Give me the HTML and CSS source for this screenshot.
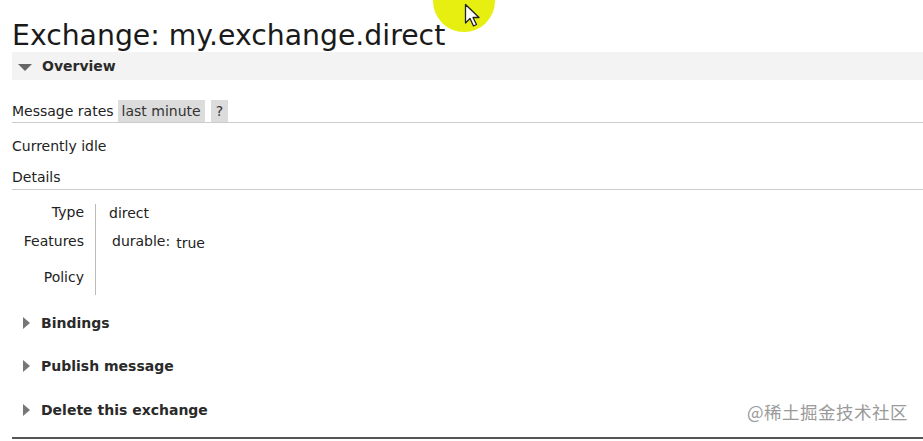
FILE: index.html
```html
<!DOCTYPE html>
<html>
<head>
<meta charset="utf-8">
<link rel="stylesheet" href="styles.css">
</head>
<body>
<div class="page">
  <h1 class="title">Exchange: my.exchange.direct</h1>
  <div class="section-head open"><span class="tri-down"></span><span class="section-label">Overview</span></div>
  <div class="rates">
    <span class="rates-label">Message rates</span>
    <span class="pill">last minute</span>
    <span class="pill help">?</span>
  </div>
  <div class="idle">Currently idle</div>
  <div class="details-head">Details</div>
  <div class="facts">
    <div class="keys">
      <div class="key k-type">Type</div>
      <div class="key k-feat">Features</div>
      <div class="key k-pol">Policy</div>
    </div>
    <div class="vals">
      <div class="val v-type">direct</div>
      <div class="val v-feat"><span class="fkey">durable:</span><span class="fval">true</span></div>
      <div class="val v-pol"></div>
    </div>
  </div>
  <div class="section-head closed s1"><span class="tri-right"></span><span class="section-label">Bindings</span></div>
  <div class="section-head closed s2"><span class="tri-right"></span><span class="section-label">Publish message</span></div>
  <div class="section-head closed s3"><span class="tri-right"></span><span class="section-label">Delete this exchange</span><span class="watermark">@稀土掘金技术社区</span></div>
  <div class="footer-line"></div>
</div>
<div class="cursor-hl">
  <svg class="cursor" width="18" height="26" viewBox="0 0 18 26"><path d="M1.5 1.5 L1.5 20 L6 15.5 L9.5 23 L12.5 21.5 L9 14.5 L15 14.5 Z" fill="#fff" stroke="#222" stroke-width="1.3" stroke-linejoin="round"/></svg>
</div>
</body>
</html>
```
FILE: styles.css
```css
html, body { margin: 0; padding: 0; background: #fff; }
body { font-family: "DejaVu Sans", Verdana, sans-serif; color: #222; font-size: 14px; overflow: hidden; width: 923px; height: 441px; position: relative; }
.page { padding: 0 0 0 12px; }
.title { margin: 0; padding-top: 19px; font-weight: normal; font-size: 28.3px; line-height: 33px; height: 33px; color: #1a1a1a; white-space: nowrap; }
.section-head { display: flex; align-items: center; height: 28px; }
.section-head.open { background: #f3f3f3; }
.section-label { font-weight: bold; font-size: 14px; color: #2a2a2a; }
.tri-down { width: 0; height: 0; border-left: 7px solid transparent; border-right: 7px solid transparent; border-top: 7px solid #666; margin: 2px 10px 0 6px; }
.tri-right { width: 0; height: 0; border-top: 6px solid transparent; border-bottom: 6px solid transparent; border-left: 7px solid #777; margin: 0 11px 0 11px; }
.rates { margin-top: 20px; display: flex; align-items: stretch; height: 22px; border-bottom: 1px solid #ccc; }
.rates-label { line-height: 22px; margin-right: 4px; }
.pill { background: #dcdcdc; line-height: 22px; padding: 0 4px; margin-right: 6px; color: #333; }
.pill.help { padding: 0 5px; }
.idle { margin-top: 14px; line-height: 18px; }
.details-head { margin-top: 13px; line-height: 18px; padding-bottom: 3px; border-bottom: 1px solid #ccc; }
.facts { display: flex; margin-top: 14px; }
.keys { width: 72px; text-align: right; padding-right: 11px; border-right: 1px solid #bbb; }
.key { color: #222; }
.k-type { height: 29px; line-height: 16px; }
.k-feat { height: 36px; line-height: 16px; }
.k-pol { height: 26px; line-height: 16px; }
.vals { padding-left: 13px; }
.v-type { height: 29px; line-height: 18px; }
.v-feat { height: 36px; line-height: 16px; padding-left: 3px; }
.fval { margin-left: 6px; position: relative; top: 2px; }
.section-head.closed { height: 16px; }
.s1 { margin-top: 20px; }
.s2 { margin-top: 27px; }
.s3 { margin-top: 28px; position: relative; }
.watermark { position: absolute; left: 735px; top: -3px; font-family: "Noto Sans CJK SC", sans-serif; font-size: 17.5px; color: #9a9a9a; letter-spacing: 0.5px; }
.footer-line { margin-top: 19px; height: 2px; background: #555; }
.cursor-hl { position: absolute; left: 433px; top: -30px; width: 62px; height: 62px; border-radius: 50%; background: #e6ef10; }
.cursor { position: absolute; left: 31px; top: 33px; }
```
